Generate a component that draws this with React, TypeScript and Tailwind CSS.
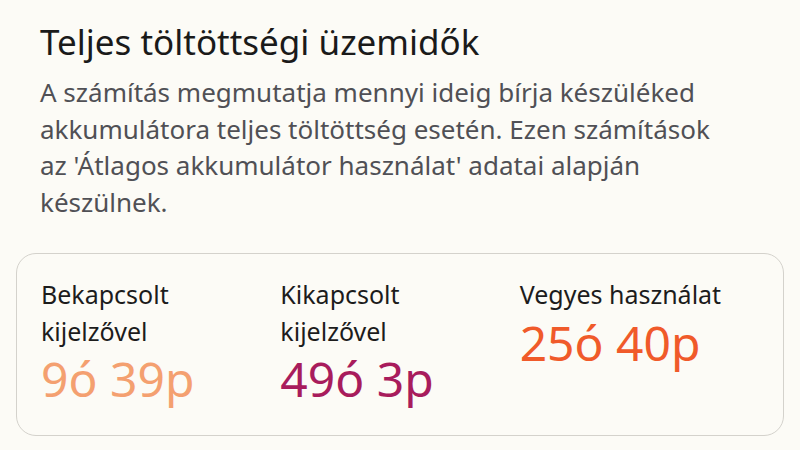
import React from "react";

const items = [
  { label: ["Bekapcsolt", "kijelzővel"], value: "9ó 39p", color: "text-[#f4a070]" },
  { label: ["Kikapcsolt", "kijelzővel"], value: "49ó 3p", color: "text-[#a81c5c]" },
  { label: ["Vegyes használat"], value: "25ó 40p", color: "text-[#f05a2a]" },
];

export default function App() {
  return (
    <div
      className="w-[800px] h-[450px] bg-[#fcfbf6] overflow-hidden px-4 pt-[22px]"
      style={{ fontFamily: '"Noto Sans", "Open Sans", sans-serif' }}
    >
      <div className="px-6">
        <h1 className="text-[35px] leading-[40px] text-[#1a1a1a] whitespace-nowrap">Teljes töltöttségi üzemidők</h1>
        <p className="text-[26px] leading-[36.5px] text-[#505055] mt-[12px] whitespace-nowrap">
          A számítás megmutatja mennyi ideig bírja készüléked
          <br />
          akkumulátora teljes töltöttség esetén. Ezen számítások
          <br />
          az 'Átlagos akkumulátor használat' adatai alapján
          <br />
          készülnek.
        </p>
      </div>
      <div className="mt-[33px] h-[183px] rounded-[20px] border-[1.5px] border-[#d4d2cc] px-6 pt-[22px] grid grid-cols-3">
        {items.map((it) => (
          <div key={it.value} className="pr-2">
            <div className="text-[25px] leading-[36.5px] text-[#1c1c1c] whitespace-nowrap">
              {it.label.map((l, i) => (
                <div key={i}>{l}</div>
              ))}
            </div>
            <div className={`text-[48px] leading-[60px] whitespace-nowrap ${it.color}`}>{it.value}</div>
          </div>
        ))}
      </div>
    </div>
  );
}
